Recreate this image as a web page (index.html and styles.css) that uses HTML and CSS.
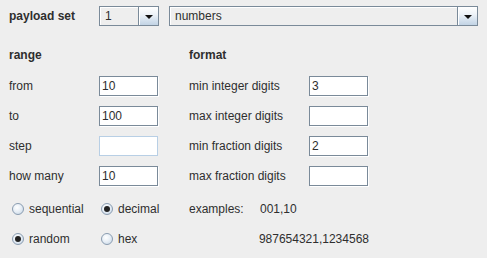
FILE: index.html
```html
<!DOCTYPE html>
<html>
<head>
<meta charset="utf-8">
<link rel="stylesheet" href="styles.css">
</head>
<body>
<div class="panel">
  <div class="top">
    <span class="hdr top-label">payload set</span>
    <div class="combo combo-small"><span class="combo-val">1</span><span class="combo-btn"><span class="tri"></span></span></div>
    <div class="combo combo-wide"><span class="combo-val">numbers</span><span class="combo-btn"><span class="tri"></span></span></div>
  </div>
  <div class="grid">
    <span class="hdr cell head">range</span>
    <span class="cell"></span>
    <span class="hdr cell head">format</span>
    <span class="cell"></span>

    <span class="cell">from</span>
    <span class="field">10</span>
    <span class="cell">min integer digits</span>
    <span class="field">3</span>

    <span class="cell">to</span>
    <span class="field">100</span>
    <span class="cell">max integer digits</span>
    <span class="field"></span>

    <span class="cell">step</span>
    <span class="field field-light"></span>
    <span class="cell">min fraction digits</span>
    <span class="field">2</span>

    <span class="cell">how many</span>
    <span class="field">10</span>
    <span class="cell">max fraction digits</span>
    <span class="field"></span>

    <span class="radio cell"><span class="dot"></span>sequential</span>
    <span class="radio radio-c2 cell"><span class="dot on"></span>decimal</span>
    <span class="cell examples"><span class="ex-label">examples:</span><span>001,10</span></span>

    <span class="radio cell"><span class="dot on"></span>random</span>
    <span class="radio radio-c2 cell"><span class="dot"></span>hex</span>
    <span class="cell examples"><span class="ex-label"></span><span>987654321,1234568</span></span>
  </div>
</div>
</body>
</html>
```
FILE: styles.css
```css
html, body {
  margin: 0;
  padding: 0;
  background: #eeeeee;
}
body {
  font-family: "Liberation Sans", Arial, sans-serif;
  font-size: 12px;
  color: #2e2e2e;
  width: 487px;
  height: 258px;
  overflow: hidden;
}
.hdr {
  font-weight: bold;
}
.top {
  display: flex;
  align-items: center;
  padding: 6px 0 0 9px;
  height: 20px;
}
.top-label {
  width: 90px;
}
.combo {
  height: 18px;
  border: 1px solid #7a8a99;
  display: flex;
  background: #eeeeee;
  box-sizing: content-box;
}
.combo-small {
  width: 58px;
}
.combo-wide {
  width: 307px;
  margin-left: 10px;
}
.combo-val {
  flex: 1;
  line-height: 18px;
  padding-left: 5px;
  box-shadow: inset 1px 1px 0 #ffffff;
}
.combo-btn {
  width: 19px;
  border-left: 1px solid #7a8a99;
  background: linear-gradient(#ffffff, #eef3f8 40%, #d7e3ef 70%, #c2d3e4);
  box-shadow: inset 1px 1px 0 #ffffff;
  display: flex;
  align-items: center;
  justify-content: center;
}
.tri {
  width: 0;
  height: 0;
  border-left: 4px solid transparent;
  border-right: 4px solid transparent;
  border-top: 4px solid #111111;
  margin-top: 1px;
}
.grid {
  display: grid;
  grid-template-columns: 90px 90px 120px 60px;
  grid-template-rows: 32px 30px 30px 30px 33px 30px 30px;
  padding-left: 9px;
  margin-top: 18px;
  align-items: start;
}
.cell {
  height: 20px;
  line-height: 20px;
  white-space: nowrap;
}
.head {
  margin-top: 1px;
}
.field {
  width: 55px;
  height: 18px;
  line-height: 18px;
  border: 1px solid #7a8a99;
  box-shadow: 1px 1px 0 #ffffff;
  background: #ffffff;
  padding-left: 2px;
  color: #2e2e2e;
}
.field-light {
  border-color: #b8cfe5;
  box-shadow: none;
}
.radio {
  display: flex;
  align-items: center;
  padding-left: 3px;
}
.radio-c2 {
  padding-left: 2px;
}
.dot {
  width: 10px;
  height: 10px;
  border-radius: 50%;
  border: 1px solid #8a9cb0;
  background: radial-gradient(circle at 40% 35%, #ffffff 0%, #e8eff6 45%, #c3d3e3 100%);
  margin-right: 5px;
  position: relative;
  flex: none;
}
.dot.on::after {
  content: "";
  position: absolute;
  left: 2px;
  top: 2px;
  width: 6px;
  height: 6px;
  border-radius: 50%;
  background: #222222;
}
.examples {
  grid-column: 3 / span 2;
  display: flex;
}
.ex-label {
  width: 71px;
}
```
